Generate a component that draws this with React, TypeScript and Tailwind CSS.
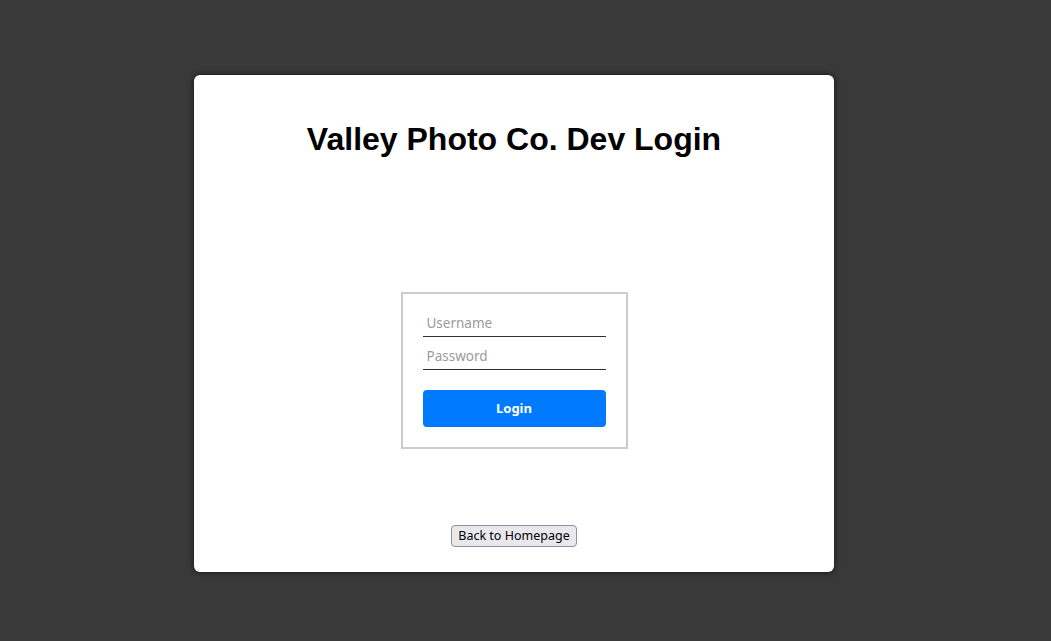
export default function App() {
  return (
    <div className="min-h-[641px] w-full bg-[#393939] pt-[75px] font-['Noto_Sans',sans-serif]">
      <div className="ml-[194px] flex w-[640px] flex-col items-center rounded-md bg-white pt-[46px] pb-[25px] shadow-[0_0_6px_rgba(0,0,0,0.7)]">
        <h1 className="h-[37px] font-['Liberation_Sans',Arial,sans-serif] text-[32px] leading-[37px] font-bold text-black">
          Valley Photo Co. Dev Login
        </h1>

        {/* Login form */}
        <form className="mt-[134px] flex w-[227px] flex-col border-2 border-[#cccccc] p-5" onSubmit={e => e.preventDefault()}>
          <input
            type="text"
            placeholder="Username"
            className="h-[23px] w-full border-b border-[#333] px-1 pb-[5px] text-[13.5px] text-black outline-none placeholder:text-[#9a9a9a]"
          />
          <input
            type="password"
            placeholder="Password"
            className="mt-[10px] h-[23px] w-full border-b border-[#333] px-1 pb-[5px] text-[13.5px] text-black outline-none placeholder:text-[#9a9a9a]"
          />
          <button
            type="submit"
            className="mt-5 h-[37px] w-full rounded bg-[#007bff] text-[13px] font-bold text-white"
          >
            Login
          </button>
        </form>

        <button className="mt-[76px] h-[22px] rounded-[4px] border border-[#8f8f9d] bg-[#e9e9ed] px-[6px] text-[12.5px] leading-[18px] text-black">
          Back to Homepage
        </button>
      </div>
    </div>
  );
}
